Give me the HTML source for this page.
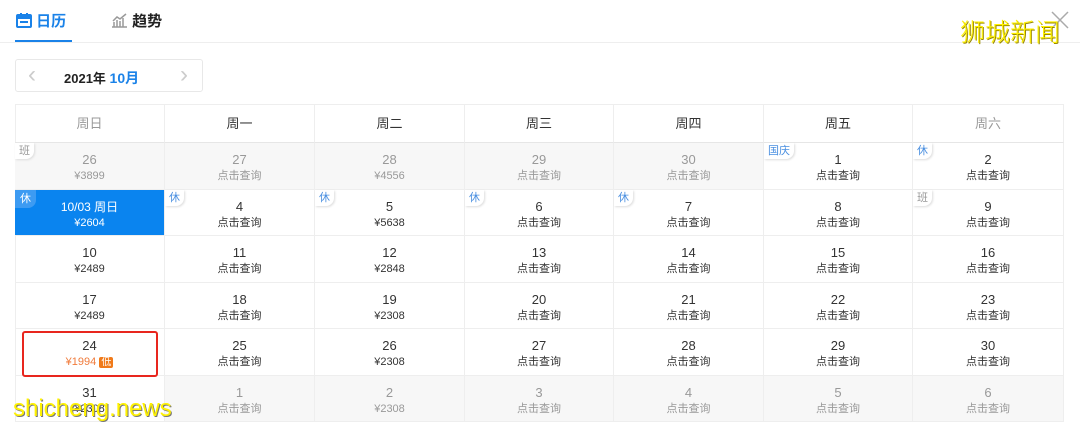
<!DOCTYPE html>
<html><head><meta charset="utf-8"><style>
*{margin:0;padding:0;box-sizing:border-box}
body{width:1080px;height:429px;background:#fff;font-family:"Liberation Sans","Noto Sans CJK SC",sans-serif;position:relative;overflow:hidden;color:#333}
.tab{position:absolute;top:10px;font-size:15px;font-weight:bold}
.cell{position:absolute;border-right:1px solid #eee;border-bottom:1px solid #eee;text-align:center}
.d{font-size:13px;color:#333;margin-top:9px;line-height:16px}
.p{font-size:11px;color:#333;line-height:16px}
.g{background:#f7f7f7}
.g .d,.g .p{color:#999}
.tag{position:absolute;left:0;top:0;font-size:11px;color:#4a8fe0;background:#fff;padding:1px 4px;border-radius:0 0 8px 0;box-shadow:1px 1px 2px #ddd;line-height:14px}
.tag.b{color:#999}
.hd{position:absolute;top:104px;height:39px;line-height:39px;text-align:center;font-size:13px;border-right:1px solid #eee;border-bottom:1px solid #e6e6e6}
</style></head><body>
<div class="tab" style="left:16px;color:#1a82e8">
<svg width="16" height="15" style="vertical-align:-2px" viewBox="0 0 16 15"><rect x="1" y="2" width="14" height="12" rx="1" fill="none" stroke="#1a82e8" stroke-width="2"/><rect x="1" y="2" width="14" height="4" fill="#1a82e8"/><rect x="4" y="0" width="2" height="4" fill="#1a82e8"/><rect x="10" y="0" width="2" height="4" fill="#1a82e8"/><rect x="4" y="8" width="8" height="2" fill="#1a82e8"/></svg> 日历</div>
<div style="position:absolute;left:15px;top:40px;width:57px;height:3px;background:#1a82e8"></div>
<div class="tab" style="left:111px;color:#222"><svg width="17" height="15" style="vertical-align:-2px" viewBox="0 0 17 15"><path d="M1 14h15M3 14V9M6 14V7M9 14V8M12 14V5M2 8l4-4 3 2 6-5" fill="none" stroke="#999" stroke-width="1.5"/></svg> 趋势</div>
<div style="position:absolute;left:0;top:42px;width:1080px;height:1px;background:#eee"></div>
<svg style="position:absolute;left:1050px;top:10px" width="20" height="20"><path d="M2 2L18 18M18 2L2 18" stroke="#aaa" stroke-width="1.5"/></svg>
<div style="position:absolute;left:960px;top:16px;font-size:25px;color:#fff200;text-shadow:1px 1px 0 #998800;font-family:'Noto Sans CJK SC',sans-serif;font-weight:300;line-height:30px">狮城新闻</div>
<div style="position:absolute;left:15px;top:59px;width:188px;height:33px;border:1px solid #e8e8e8;border-radius:3px">
<span style="position:absolute;left:12px;top:1px;color:#ccc;font-size:24px;line-height:28px">&lsaquo;</span>
<span style="position:absolute;left:48px;top:8px;font-size:13px;font-weight:bold;color:#222">2021年 <span style="color:#1a82e8;font-size:14px">10月</span></span>
<span style="position:absolute;left:164px;top:1px;color:#ccc;font-size:24px;line-height:28px">&rsaquo;</span></div>
<div style="position:absolute;left:15px;top:104px;width:1049px;height:318px;border-left:1px solid #eee;border-top:1px solid #eee"></div>
<div id="g"></div>
<script>
var xs=[15,165,315,465,614,764,913,1064],ys=[143,190,236,283,329,376,422];
var hd=["周日","周一","周二","周三","周四","周五","周六"],h="";
for(var i=0;i<7;i++)h+='<div class="hd" style="left:'+xs[i]+'px;width:'+(xs[i+1]-xs[i])+'px;color:'+(i==0||i==6?'#999':'#333')+'">'+hd[i]+'</div>';
var Q="点击查询";
var data=[
[["26","¥3899","g","班b"],["27",Q,"g"],["28","¥4556","g"],["29",Q,"g"],["30",Q,"g"],["1",Q,"","国庆"],["2",Q,"","休"]],
[["10/03 周日","¥2604","s","休"],["4",Q,"","休"],["5","¥5638","","休"],["6",Q,"","休"],["7",Q,"","休"],["8",Q,""],["9",Q,"","班b"]],
[["10","¥2489"],["11",Q],["12","¥2848"],["13",Q],["14",Q],["15",Q],["16",Q]],
[["17","¥2489"],["18",Q],["19","¥2308"],["20",Q],["21",Q],["22",Q],["23",Q]],
[["24","¥1994","r"],["25",Q],["26","¥2308"],["27",Q],["28",Q],["29",Q],["30",Q]],
[["31","¥2308"],["1",Q,"g"],["2","¥2308","g"],["3",Q,"g"],["4",Q,"g"],["5",Q,"g"],["6",Q,"g"]]];
for(var r=0;r<6;r++)for(var c=0;c<7;c++){var d=data[r][c],cl=d[2]||"",st='left:'+xs[c]+'px;top:'+ys[r]+'px;width:'+(xs[c+1]-xs[c])+'px;height:'+(ys[r+1]-ys[r])+'px;';
if(cl=="s")st+='background:#0a84ef;';
h+='<div class="cell '+(cl=="g"?"g":"")+'" style="'+st+'">';
if(d[3]){var t=d[3],b=t.slice(-1)=="b";t=b?t.slice(0,-1):t;
if(cl=="s")h+='<div class="tag" style="background:#3d9bf2;color:#fff;box-shadow:none;padding:2px 5px">'+t+'</div>';
else h+='<div class="tag'+(b?' b':'')+'">'+t+'</div>';}
if(cl=="s")h+='<div class="d" style="color:#fff;font-size:12px">'+d[0]+'</div><div class="p" style="color:#fff">'+d[1]+'</div>';
else if(cl=="r")h+='<div class="d">'+d[0]+'</div><div class="p" style="color:#f07a3a">'+d[1]+' <span style="background:#f07a1a;color:#fff;font-size:10px;padding:0 2px;border-radius:2px">低</span></div>';
else h+='<div class="d">'+d[0]+'</div><div class="p">'+d[1]+'</div>';
h+='</div>';}
h+='<div style="position:absolute;left:22px;top:331px;width:136px;height:46px;border:2px solid #e8261e;border-radius:3px"></div>';
h+='<div style="position:absolute;left:13px;top:394px;font-size:24px;color:#fff200;text-shadow:1px 1px 0 #777;line-height:30px;font-family:\'Liberation Sans\',sans-serif">shicheng.news</div>';
document.getElementById("g").innerHTML=h;
</script>
</body></html>
